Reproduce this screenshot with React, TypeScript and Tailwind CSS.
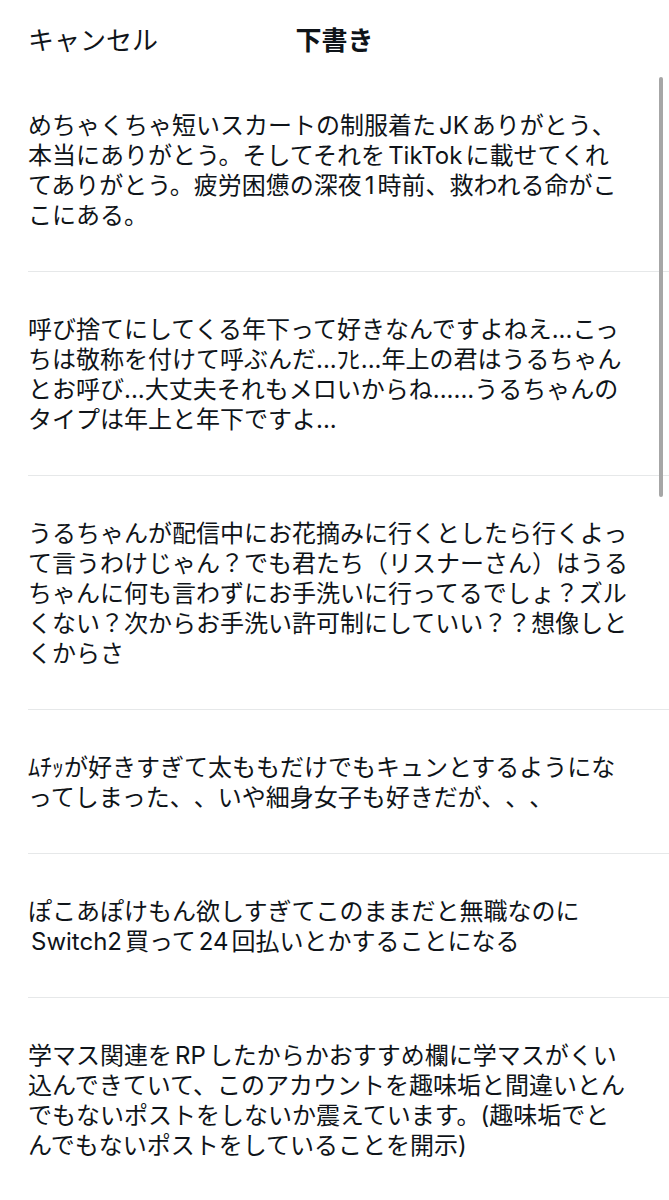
import React from 'react';

const drafts: string[][] = [
  [
    'めちゃくちゃ短いスカートの制服着たJKありがとう、',
    '本当にありがとう。そしてそれをTikTokに載せてくれ',
    'てありがとう。疲労困憊の深夜1時前、救われる命がこ',
    'こにある。',
  ],
  [
    '呼び捨てにしてくる年下って好きなんですよねえ...こっ',
    'ちは敬称を付けて呼ぶんだ...ﾌﾋ...年上の君はうるちゃん',
    'とお呼び...大丈夫それもメロいからね......うるちゃんの',
    'タイプは年上と年下ですよ...',
  ],
  [
    'うるちゃんが配信中にお花摘みに行くとしたら行くよっ',
    'て言うわけじゃん？でも君たち（リスナーさん）はうる',
    'ちゃんに何も言わずにお手洗いに行ってるでしょ？ズル',
    'くない？次からお手洗い許可制にしていい？？想像しと',
    'くからさ',
  ],
  [
    'ﾑﾁｯが好きすぎて太ももだけでもキュンとするようにな',
    'ってしまった、、いや細身女子も好きだが、、、',
  ],
  [
    'ぽこあぽけもん欲しすぎてこのままだと無職なのに',
    'Switch2買って24回払いとかすることになる',
  ],
  [
    '学マス関連をRPしたからかおすすめ欄に学マスがくい',
    '込んできていて、このアカウントを趣味垢と間違いとん',
    'でもないポストをしないか震えています。(趣味垢でと',
    'んでもないポストをしていることを開示)',
  ],
];

// iOS puts a little air between kana/kanji and latin runs
function Line({ text }: { text: string }) {
  const parts = text.split(/([A-Za-z0-9]+)/);
  return (
    <div className="whitespace-nowrap">
      {parts.map((p, i) =>
        /^[A-Za-z0-9]+$/.test(p) ? (
          <span key={i} className="mx-[3px]">{p}</span>
        ) : (
          <span key={i}>{p}</span>
        )
      )}
    </div>
  );
}

export default function App() {
  return (
    <div
      className="relative w-[669px] h-[1200px] overflow-hidden bg-white text-[#0f1419] [text-spacing-trim:space-all]"
      style={{ fontFamily: 'Inter, "Noto Sans CJK JP", sans-serif' }}
    >
      <header className="grid grid-cols-[1fr_auto_1fr] items-start h-[68px] pt-[24px]">
        <div className="pl-[28px] text-[26px] leading-[34px]">キャンセル</div>
        <div className="text-[26px] leading-[34px] font-bold">下書き</div>
        <div />
      </header>

      <div className="flex flex-col">
        {drafts.map((lines, i) => (
          <div key={i} className="ml-[28px] pt-[43px] pb-[40px] border-b border-[#e6e8e9]">
            <div className="text-[24px] leading-[30px]">
              {lines.map((l, j) => (
                <Line key={j} text={l} />
              ))}
            </div>
          </div>
        ))}
      </div>

      <div className="absolute top-[77px] right-[6px] w-[4px] h-[420px] rounded-full bg-[#a6a6a6]" />
    </div>
  );
}
